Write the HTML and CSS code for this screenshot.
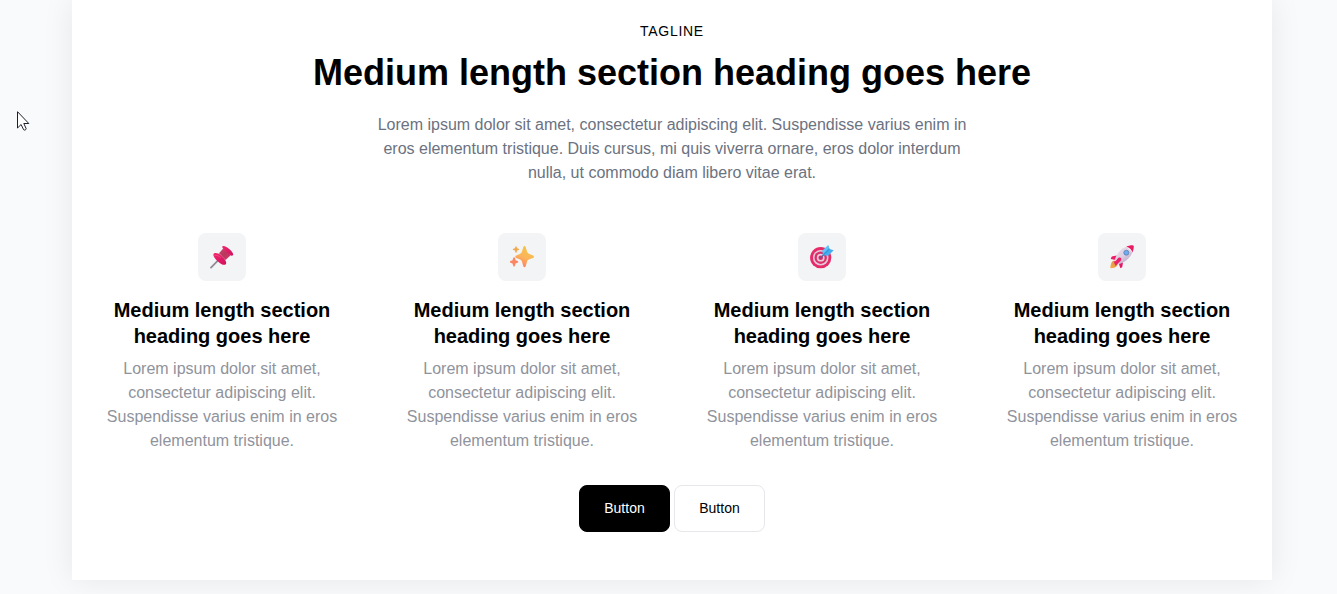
FILE: index.html
```html
<!DOCTYPE html>
<html lang="en">
<head>
<meta charset="utf-8">
<meta name="viewport" content="width=device-width, initial-scale=1">
<title>Features</title>
<link rel="stylesheet" href="styles.css">
</head>
<body>
<main class="panel">
  <header class="intro">
    <p class="tagline">TAGLINE</p>
    <h1 class="title">Medium length section heading goes here</h1>
    <p class="lead">Lorem ipsum dolor sit amet, consectetur adipiscing elit. Suspendisse varius enim in eros elementum tristique. Duis cursus, mi quis viverra ornare, eros dolor interdum nulla, ut commodo diam libero vitae erat.</p>
  </header>
  <section class="features">
    <article class="feature">
      <div class="badge">
        <svg class="icon" viewBox="0 0 24 24" aria-hidden="true">
          <defs>
            <linearGradient id="pinHead" x1="0" y1="0" x2="1" y2="1"><stop offset="0" stop-color="#f0286c"/><stop offset="1" stop-color="#d01060"/></linearGradient>
            <linearGradient id="pinNeck" x1="0" y1="0" x2="1" y2="1"><stop offset="0" stop-color="#c8486c"/><stop offset=".5" stop-color="#b8385c"/><stop offset="1" stop-color="#d8386c"/></linearGradient>
          </defs>
          <path d="M8.800 14.600 1 22.600" stroke="#918b99" stroke-width="1.800" stroke-linecap="round"/>
          <path d="M9 8.200 13.200 3.400 20.400 10.400 15.500 15z" fill="url(#pinNeck)"/>
          <path d="M3.500 9.200c.8-1.800 4.400-1.400 7.600 1.200l3.200 3.400c2 2.600 2.600 5.200.9 5.900-1.700.7-4.700-.8-7.600-3.500S2.800 11 3.500 9.200z" fill="url(#pinHead)"/>
          <path d="M12.500 1.200c1-.9 3.700.1 6.700 2.800s4.700 5.200 3.800 6.200c-1 1-3 .5-5.200-1.600C15.200 6.200 11.300 2.300 12.500 1.200z" fill="url(#pinHead)"/>
          <path d="M4.700 10.300c2.200-.5 4.200.7 5.800 2.200" fill="none" stroke="#fb5385" stroke-width=".7" stroke-linecap="round"/>
        </svg>
      </div>
      <h2 class="name">Medium length section heading goes here</h2>
      <p class="text">Lorem ipsum dolor sit amet, consectetur adipiscing elit. Suspendisse varius enim in eros elementum tristique.</p>
    </article>
    <article class="feature">
      <div class="badge">
        <svg class="icon" viewBox="0 0 24 24" aria-hidden="true">
          <defs>
            <linearGradient id="spark" x1=".7" y1="0" x2=".3" y2="1"><stop offset="0" stop-color="#f6c544"/><stop offset=".55" stop-color="#fbb45a"/><stop offset="1" stop-color="#ff7b62"/></linearGradient>
          </defs>
          <path d="M13.300 2.100c.4-1.400 2-1.400 2.400 0l1.300 4.500c.3 1.200 1.200 2 2.300 2.400l3.800 1.400c1.200.5 1.200 2 0 2.500l-3.800 1.400c-1.100.4-2 1.300-2.300 2.400l-1.300 4.500c-.4 1.400-2 1.400-2.400 0L12 16.700c-.3-1.100-1.200-2-2.300-2.400l-3.500-1.400c-1.200-.5-1.200-2 0-2.500L9.700 9c1.100-.4 2-1.200 2.300-2.400z" fill="url(#spark)"/>
          <path d="M5.400 1.700c.2-.7 1-.7 1.200 0l.5 1.500 1.500.6c.7.300.7 1 0 1.200l-1.500.6-.5 1.600c-.2.7-1 .7-1.200 0l-.5-1.600L3.400 5c-.7-.2-.7-.9 0-1.200l1.500-.6z" fill="#efa94f"/>
          <path d="M3.300 12.800c.2-.8 1.300-.8 1.500 0l.8 2.400 2 .9c.8.400.8 1.300 0 1.600l-2 .8-.8 2.500c-.2.800-1.300.8-1.500 0l-.8-2.500-2-.8c-.8-.3-.8-1.200 0-1.600l2-.9z" fill="#fb8762"/>
        </svg>
      </div>
      <h2 class="name">Medium length section heading goes here</h2>
      <p class="text">Lorem ipsum dolor sit amet, consectetur adipiscing elit. Suspendisse varius enim in eros elementum tristique.</p>
    </article>
    <article class="feature">
      <div class="badge">
        <svg class="icon" viewBox="0 0 24 24" aria-hidden="true">
          <circle cx="10.700" cy="12.700" r="10.600" fill="#e52b68"/>
          <circle cx="10.700" cy="12.700" r="7.800" fill="#e2c9da"/>
          <circle cx="10.700" cy="12.700" r="6.200" fill="#dc3069"/>
          <circle cx="10.700" cy="12.700" r="3.900" fill="#ebcddd"/>
          <circle cx="10.700" cy="12.700" r="2.300" fill="#d52d67"/>
          <path d="M10.900 12.500 16 7.600" stroke="#5360a5" stroke-width="1.300" stroke-linecap="round"/>
          <path d="M12.600 10.200 12.600 5.600 18.200.2 19.600 3.900 23.700 5.300 18.200 10.800z" fill="#45aef0"/>
          <path d="M13.400 9.900 19.600 4" stroke="#257fc4" stroke-width=".8"/>
          <path d="M12.600 5.600 18.200.2 19.100 2.700 13.200 8.400z" fill="#63c4fa"/>
        </svg>
      </div>
      <h2 class="name">Medium length section heading goes here</h2>
      <p class="text">Lorem ipsum dolor sit amet, consectetur adipiscing elit. Suspendisse varius enim in eros elementum tristique.</p>
    </article>
    <article class="feature">
      <div class="badge">
        <svg class="icon" viewBox="0 0 24 24" aria-hidden="true">
          <defs>
            <linearGradient id="hull" x1=".2" y1=".1" x2=".8" y2=".9"><stop offset="0" stop-color="#e6dbea"/><stop offset=".5" stop-color="#ddd0e2"/><stop offset="1" stop-color="#b9a4c5"/></linearGradient>
            <linearGradient id="flame" x1="1" y1="0" x2="0" y2="1"><stop offset="0" stop-color="#c98b4e"/><stop offset="1" stop-color="#ffae42"/></linearGradient>
          </defs>
          <path d="M4.200 15.400C1.700 16.100.600 18.500.3 22.500c0 .6.300.9.900.8 4.300-.4 6.600-2 6.600-5.300z" fill="url(#flame)"/>
          <path d="M6.800 10.600 2.700 11.300c-1 .2-1.600 1-1.900 2.800L5.600 15z" fill="#f01c65"/>
          <path d="M13 17.200 12.400 21.300c-.2 1-.8 1.600-2 1.900L8.600 18z" fill="#e41865"/>
          <path d="M4.600 15.200C6.300 9.700 10.200 3.800 16.300 1.700L22.300 7.400C20.300 13 15 17.100 8.800 19.200z" fill="url(#hull)"/>
          <path d="M16.300 1.700C18.600.7 21.300.1 23 .4c.6.100.8.4.8.9 0 2-.5 4.300-1.500 6.100-.8-3.100-2.800-5-6-5.700z" fill="#e91b61"/>
          <path d="M3.800 16.800c1.800-.2 2.600-1.600 3.500-2.900 1.500-1.900 3.700-1.600 4 .2.200 1.900-1.800 2.800-3.200 4.200l-2.500 2.400z" fill="#ed1f66"/>
          <circle cx="16.300" cy="7.700" r="2.500" fill="#69adf5" stroke="#627eaf" stroke-width=".8"/>
        </svg>
      </div>
      <h2 class="name">Medium length section heading goes here</h2>
      <p class="text">Lorem ipsum dolor sit amet, consectetur adipiscing elit. Suspendisse varius enim in eros elementum tristique.</p>
    </article>
  </section>
  <div class="actions">
    <button type="button" class="button button-primary">Button</button>
    <button type="button" class="button">Button</button>
  </div>
</main>
<svg class="pointer" viewBox="0 0 13 21" aria-hidden="true">
  <path d="M.5.700v16.300l3.600-3.500 2.500 5.200c.5 1 3 0 2.500-1.200L6.800 12.500h5z" fill="#fff" stroke="#1e1e2a"/>
</svg>
</body>
</html>
```

FILE: styles.css
```css
* {
  box-sizing: border-box;
}

body {
  margin: 0;
  padding: 0 65px 14px 72px;
  background: #f9fafc;
  color: #000;
  font-family: "Liberation Sans", Arial, sans-serif;
  font-size: 16px;
  line-height: 24px;
}

h1, h2, p {
  margin: 0;
}

.panel {
  display: flex;
  flex-direction: column;
  max-width: 1200px;
  margin: 0 auto;
  padding: 21px 30px 48px;
  background: #fff;
  box-shadow: 0 0 30px rgba(0, 0, 0, 0.08);
  text-align: center;
}

.intro {
  display: flex;
  flex-direction: column;
  align-items: center;
}

.tagline {
  font-size: 14px;
  line-height: 20px;
  letter-spacing: 0.05em;
}

.title {
  margin-top: 8px;
  font-size: 36px;
  line-height: 48px;
}

.lead {
  max-width: 600px;
  margin-top: 16px;
  color: #6b7280;
}

.features {
  display: grid;
  grid-template-columns: repeat(4, 1fr);
  gap: 60px;
  margin-top: 48px;
}

.feature {
  display: flex;
  flex-direction: column;
  align-items: center;
}

.badge {
  display: flex;
  align-items: center;
  justify-content: center;
  width: 48px;
  height: 48px;
  border-radius: 8px;
  background: #f3f4f6;
}

.icon {
  width: 24px;
  height: 24px;
}

.name {
  margin-top: 16px;
  font-size: 20px;
  line-height: 26px;
}

.text {
  margin-top: 8px;
  color: #8f939c;
}

.actions {
  display: flex;
  justify-content: center;
  gap: 4px;
  margin-top: 32px;
}

.button {
  min-width: 91px;
  padding: 14px 24px;
  border: 1px solid #e5e7eb;
  border-radius: 8px;
  background: #fff;
  color: #000;
  font-family: inherit;
  font-size: 14px;
  line-height: 17px;
}

.button-primary {
  border-color: #000;
  background: #000;
  color: #fff;
}

.pointer {
  position: absolute;
  top: 111px;
  left: 17px;
  width: 13px;
  height: 21px;
}
```
